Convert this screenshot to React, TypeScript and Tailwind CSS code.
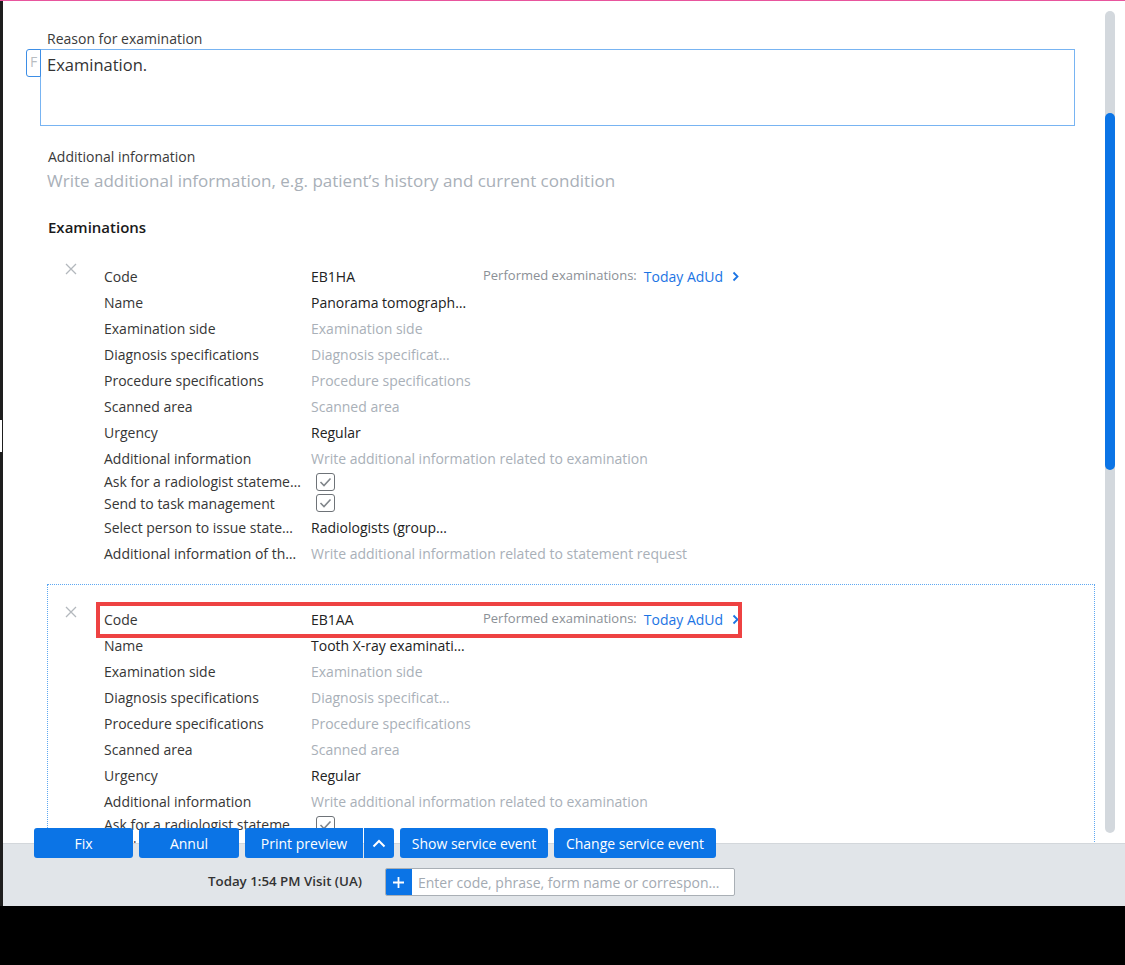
import React from "react";

type Row = {
  label: string;
  value?: string;
  ph?: string;
  check?: boolean;
  h: "n" | "c";
  perf?: boolean;
};

const rows = (code: string, name: string): Row[] => [
  { label: "Code", value: code, h: "n", perf: true },
  { label: "Name", value: name, h: "n" },
  { label: "Examination side", ph: "Examination side", h: "n" },
  { label: "Diagnosis specifications", ph: "Diagnosis specificat…", h: "n" },
  { label: "Procedure specifications", ph: "Procedure specifications", h: "n" },
  { label: "Scanned area", ph: "Scanned area", h: "n" },
  { label: "Urgency", value: "Regular", h: "n" },
  { label: "Additional information", ph: "Write additional information related to examination", h: "n" },
  { label: "Ask for a radiologist stateme…", check: true, h: "c" },
  { label: "Send to task management", check: true, h: "c" },
  { label: "Select person to issue state…", value: "Radiologists (group…", h: "n" },
  { label: "Additional information of th…", ph: "Write additional information related to statement request", h: "n" },
];

function XIcon() {
  return (
    <svg width="12" height="12" viewBox="0 0 12 12">
      <path d="M1 1L11 11M11 1L1 11" stroke="#b3b8bd" strokeWidth="1.3" />
    </svg>
  );
}

function CheckBox() {
  return (
    <div className="w-[19px] h-[18px] rounded-[3px] border-[1.5px] border-[#6e7378] flex items-center justify-center bg-white">
      <svg width="13" height="10" viewBox="0 0 13 10">
        <path d="M1.5 5L5 8.5L11.5 1.5" stroke="#80858a" strokeWidth="1.6" fill="none" />
      </svg>
    </div>
  );
}

function RowView({ r, highlight }: { r: Row; highlight?: boolean }) {
  return (
    <div className={`relative flex items-center whitespace-nowrap text-[14px] ${r.h === "n" ? "h-[26px]" : "h-[21.5px]"}`}>
      {highlight && (
        <div className="absolute left-[-8px] top-[-4px] w-[646px] h-[36px] border-[4px] border-[#ee4242]" />
      )}
      <div className="w-[207px] text-[#363636]">{r.label}</div>
      <div className="w-[172px] flex items-center">
        {r.value && <span className="text-[#222]">{r.value}</span>}
        {r.ph && <span className="text-[#a9b0b8]">{r.ph}</span>}
        {r.check && (
          <div className="ml-[5px]">
            <CheckBox />
          </div>
        )}
      </div>
      {r.perf && (
        <div className="flex items-center">
          <span className="text-[13px] text-[#8b9096]">Performed examinations:</span>
          <span className="ml-[7px] text-[14px] text-[#1b74e4]">Today AdUd</span>
          <svg className="ml-[9px]" width="7" height="11" viewBox="0 0 7 11">
            <path d="M1.5 1.5L5.5 5.5L1.5 9.5" stroke="#1b74e4" strokeWidth="1.8" fill="none" />
          </svg>
        </div>
      )}
    </div>
  );
}

function Block({ code, name, dotted, highlight }: { code: string; name: string; dotted?: boolean; highlight?: boolean }) {
  return (
    <div
      className={`flex ml-[21px] pt-[20px] pb-[8px] border ${
        dotted ? "border-dotted border-[#5ea8f2]" : "border-transparent"
      }`}
    >
      <div className="pl-[17px] w-[56px] pt-px">
        <XIcon />
      </div>
      <div className="pt-px flex flex-col">
        {rows(code, name).map((r, i) => (
          <RowView key={i} r={r} highlight={highlight && i === 0} />
        ))}
      </div>
    </div>
  );
}

export default function App() {
  return (
    <div className="relative w-[1125px] h-[965px] bg-black flex flex-col overflow-hidden font-['Open_Sans','Noto_Sans',sans-serif]">
      <div className="h-[906px] flex flex-col bg-white">
        <div className="h-px bg-[#e8559d] shrink-0" />
        <div className="flex-1 flex min-h-0">
          <div className="w-[3px] bg-[#1e1e1e] flex flex-col shrink-0">
            <div className="h-[419px]" />
            <div className="h-[32px] w-[2px] bg-white" />
          </div>
          <div className="flex-1 flex flex-col min-h-0">
            <div className="flex-1 flex min-h-0 overflow-hidden">
              <main className="flex-1 overflow-hidden pl-[23px] pr-[5px] pt-[28px]">
                <div className="ml-[21px] text-[14px] leading-[20px] text-[#3a3a3a]">Reason for examination</div>
                <div className="flex mr-[20px]">
                  <div className="w-[15px] h-[28px] border border-[#3d8ee6] rounded-l-[3px] text-[14px] leading-[18px] text-[#b8bdc2] flex items-start justify-center pt-[3px] bg-white z-10">
                    F
                  </div>
                  <div className="flex-1 -ml-px h-[77px] border border-[#78b4f2] pl-[6px] pt-[3px] text-[16.5px] leading-[23px] text-[#333]">
                    Examination.
                  </div>
                </div>
                <div className="ml-[22px] mt-[21px] text-[14px] leading-[20px] text-[#3a3a3a]">Additional information</div>
                <div className="ml-[21px] mt-[2px] text-[17px] leading-[23px] text-[#a9b0b8]">
                  Write additional information, e.g. patient’s history and current condition
                </div>
                <div className="ml-[22px] mt-[25px] text-[15px] leading-[20px] font-semibold text-[#1a1a1a]">Examinations</div>
                <div className="mt-[4px]">
                  <Block code="EB1HA" name="Panorama tomograph…" />
                </div>
                <div className="mt-[9px]">
                  <Block code="EB1AA" name="Tooth X-ray examinati…" dotted highlight />
                </div>
              </main>
              <div className="w-[25px] shrink-0 pt-[10px] pb-[10px] pl-[5px]">
                <div className="w-[10px] h-full rounded-full bg-[#d3d8dd] pt-[102px]">
                  <div className="w-[10px] h-[357px] rounded-full bg-[#0b74e6]" />
                </div>
              </div>
            </div>
            <footer className="h-[63px] shrink-0 bg-[#e1e5e9] border-t border-[#d3d7db] flex items-start pt-[24px] pl-[205px]">
              <div className="h-[28px] flex items-center text-[13.3px] font-semibold text-[#333] whitespace-nowrap">Today 1:54 PM Visit (UA)</div>
              <div className="ml-[23px] w-[350px] h-[28px] flex bg-white border border-[#a9afb5] rounded-[2px] overflow-hidden">
                <div className="w-[26px] bg-[#0b74e6] flex items-center justify-center">
                  <svg width="13" height="13" viewBox="0 0 13 13">
                    <path d="M6.5 1V12M1 6.5H12" stroke="white" strokeWidth="1.8" />
                  </svg>
                </div>
                <div className="flex items-center pl-[6px] text-[14px] text-[#a3aab2] whitespace-nowrap">
                  Enter code, phrase, form name or correspon…
                </div>
              </div>
            </footer>
          </div>
        </div>
      </div>
      <div className="absolute left-[34px] top-[828px] flex text-[14px] text-white">
        <div className="w-[99px] h-[30px] rounded-[3px] bg-[#0b74e6] flex items-center justify-center">Fix</div>
        <div className="ml-[6px] w-[100px] h-[30px] rounded-[3px] bg-[#0b74e6] flex items-center justify-center">Annul</div>
        <div className="ml-[6px] w-[118px] h-[30px] rounded-l-[3px] bg-[#0b74e6] flex items-center justify-center">Print preview</div>
        <div className="ml-px w-[30px] h-[30px] rounded-r-[3px] bg-[#0b74e6] flex items-center justify-center">
          <svg width="14" height="9" viewBox="0 0 14 9">
            <path d="M1.5 7.5L7 2L12.5 7.5" stroke="white" strokeWidth="2" fill="none" />
          </svg>
        </div>
        <div className="ml-[6px] w-[148px] h-[30px] rounded-[3px] bg-[#0b74e6] flex items-center justify-center">Show service event</div>
        <div className="ml-[6px] w-[162px] h-[30px] rounded-[3px] bg-[#0b74e6] flex items-center justify-center">Change service event</div>
      </div>
    </div>
  );
}
